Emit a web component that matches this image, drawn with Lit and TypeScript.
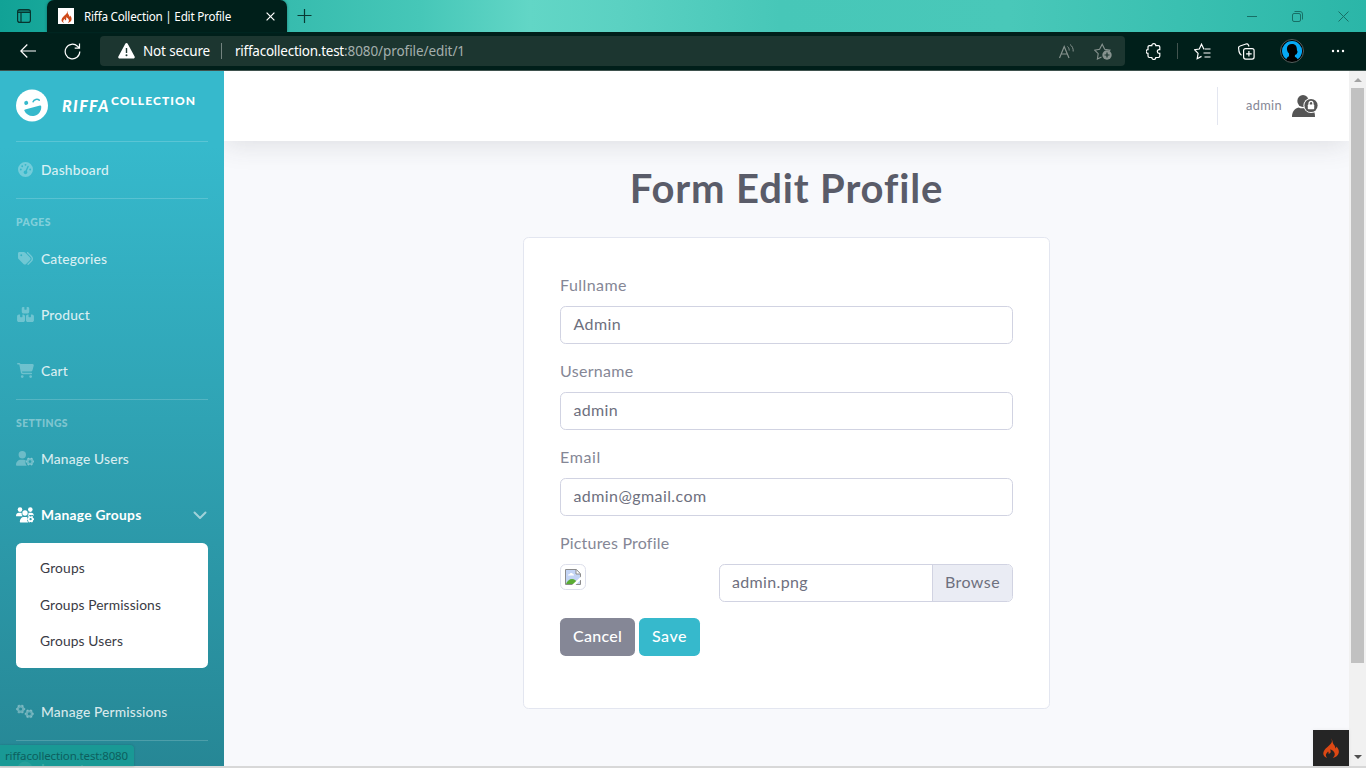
import { LitElement, html, css, svg, nothing } from "lit";
import { customElement, property } from "lit/decorators.js";

/** Text run tracked so that its advance equals the given width in pixels. */
@customElement("tracked-text")
class TrackedText extends LitElement {
  static styles = css`
    :host { display: inline-block; white-space: pre; flex: none; }
    .run { display: inline-block; }
  `;
  @property() text = "";
  @property({ type: Number }) span = 0;
  updated() {
    const run = this.renderRoot.querySelector(".run") as HTMLElement;
    run.style.letterSpacing = "0px";
    const natural = run.getBoundingClientRect().width;
    if (this.span && this.text.length > 1)
      run.style.letterSpacing = (this.span - natural) / this.text.length + "px";
  }
  render() {
    return html`<span class="run">${this.text}</span>`;
  }
}

const t = (text: string, span: number) => html`<tracked-text .text=${text} .span=${span}></tracked-text>`;

const gear = (cx: number, cy: number, r: number) => svg`
  <circle cx=${cx} cy=${cy} r=${r * 0.58} fill="none" stroke="currentColor" stroke-width=${r * 0.5}/>
  <circle cx=${cx} cy=${cy} r=${r * 0.86} fill="none" stroke="currentColor" stroke-width=${r * 0.3} pathLength="12" stroke-dasharray="1 1" stroke-dashoffset="0.5"/>`;

const gauge = html`<svg width="15" height="15" viewBox="0 0 512 512"><path fill="currentColor" fill-rule="evenodd" d="M0 256a256 256 0 1 1 512 0A256 256 0 1 1 0 256zM288 96a32 32 0 1 0-64 0 32 32 0 1 0 64 0zM256 416c35.300 0 64-28.700 64-64 0-17.400-6.900-33.100-18.100-44.600L366 161.700c5.300-12.100-.2-26.300-12.300-31.600s-26.300.2-31.600 12.300L257.900 288c-.6 0-1.300 0-1.900 0-35.300 0-64 28.700-64 64s28.700 64 64 64zM176 144a32 32 0 1 0-64 0 32 32 0 1 0 64 0zM96 288a32 32 0 1 0 0-64 32 32 0 1 0 0 64zm352-32a32 32 0 1 0-64 0 32 32 0 1 0 64 0z"/></svg>`;
const tags = html`<svg width="15" height="15" viewBox="0 0 512 512"><path fill="currentColor" fill-rule="evenodd" d="M345 39.100L472.800 168.400c52.400 53 52.400 138.200 0 191.200L360.800 472.900c-9.300 9.400-24.500 9.500-33.900 .2s-9.500-24.500-.2-33.900L438.600 325.900c33.900-34.300 33.900-89.400 0-123.700L310.900 72.900c-9.300-9.400-9.200-24.600 .2-33.900s24.600-9.200 33.900 .2zM0 229.500V80C0 53.500 21.500 32 48 32H197.500c17 0 33.300 6.700 45.300 18.700l168 168c25 25 25 65.500 0 90.500L277.300 442.700c-25 25-65.500 25-90.500 0l-168-168C6.700 262.700 0 246.500 0 229.500zM144 144a32 32 0 1 0 -64 0 32 32 0 1 0 64 0z"/></svg>`;
const boxes = html`<svg width="17" height="15" viewBox="0 0 576 512"><path fill="currentColor" d="M248 0H208c-26.500 0-48 21.500-48 48V160c0 35.300 28.700 64 64 64H352c35.300 0 64-28.700 64-64V48c0-26.500-21.500-48-48-48H328V80c0 8.800-7.200 16-16 16H264c-8.800 0-16-7.200-16-16V0zM64 256c-35.300 0-64 28.700-64 64V448c0 35.300 28.700 64 64 64H208c35.300 0 64-28.700 64-64V320c0-35.300-28.700-64-64-64H184v80c0 8.800-7.200 16-16 16H120c-8.800 0-16-7.200-16-16V256H64zM368 512H512c35.300 0 64-28.700 64-64V320c0-35.300-28.700-64-64-64H472v80c0 8.800-7.200 16-16 16H408c-8.800 0-16-7.200-16-16V256H368c-35.300 0-64 28.700-64 64V448c0 35.300 28.700 64 64 64z"/></svg>`;
const cart = html`<svg width="17" height="15" viewBox="0 0 576 512"><path fill="currentColor" d="M0 24C0 10.700 10.700 0 24 0H69.500c22 0 41.500 12.800 50.600 32h411c26.300 0 45.500 25 38.600 50.400l-41 152.300c-8.500 31.400-37 53.300-69.500 53.300H170.700l5.400 28.500c2.200 11.300 12.100 19.500 23.600 19.500H488c13.300 0 24 10.700 24 24s-10.700 24-24 24H199.700c-34.600 0-64.300-24.600-70.700-58.500L77.400 54.500c-.7-3.800-4-6.500-7.900-6.500H24C10.700 48 0 37.300 0 24zM128 464a48 48 0 1 1 96 0 48 48 0 1 1 -96 0zm336-48a48 48 0 1 1 0 96 48 48 0 1 1 0-96z"/></svg>`;
const userGear = html`<svg width="18" height="15" viewBox="0 0 18 15"><circle cx="6.300" cy="3.700" r="3.700" fill="currentColor"/><path fill="currentColor" d="M0 14c0-3.300 2.200-5.300 5-5.300h2.600c.8 0 1.500.2 2.100.5-.8 1.800-.1 4 1.100 5.600H.8c-.5 0-.8-.3-.8-.8z"/>${gear(14, 10.6, 4.2)}</svg>`;
const usersGear = html`<svg width="18" height="16" viewBox="0 0 18 16"><g fill="currentColor"><circle cx="4" cy="2.600" r="2.300"/><circle cx="14.300" cy="2.600" r="2.300"/><circle cx="9" cy="6" r="2.700"/><path d="M0 9c0-2 1.300-3.200 2.900-3.200h1.500c.5 0 .9.100 1.300.3C5.500 7.300 5.900 8.500 6.700 9.300H.4C.2 9.300 0 9.200 0 9zM11.400 9.300c.9-.8 1.200-2 1-3.200.4-.2.800-.3 1.200-.3h1.600c1.500 0 2.700 1.200 2.700 2.900-1-.9-2-.7-2.400-.5-1.400-.6-2.500-.2-3.200 1.100zM3.800 14.700C3.800 12 5.500 9.900 7.700 9.900h2.600c.4 0 .8.100 1.100.2-.8 2-.3 3.900.9 5.300H4.400c-.4 0-.6-.3-.6-.7z"/></g>${gear(14.6, 12.2, 3.4)}</svg>`;
const gears = html`<svg width="18" height="15" viewBox="0 0 18 15">${gear(4.6, 5.1, 4.6)}${gear(13.3, 9.8, 4.6)}</svg>`;
const disc = html`<svg width="16" height="16" viewBox="0 0 16 16"><circle cx="8" cy="8" r="7.500" fill="currentColor"/></svg>`;
const flame = (w: number, h: number, c: string) => html`<svg width=${w} height=${h} viewBox="0 0 16 20"><path fill=${c} d="M7.900 0C8.700 1 9.200 2.600 8.700 4.200 8 6.300 5 8.200 2.700 10.600.7 12.700-.3 15.300.7 17.300c.7 1.400 2 2.200 3.500 2.600-1.100-1-1.600-2-1.300-3.200.3-1.300 1.500-2 2.100-3.200.7.6.7 1.400.4 2.200 1.300.2 2.300-.7 2.300-1.900 0-.9-.5-1.600-.3-2.500 2 .7 3.500 2 4.100 3.700.7 2-.2 3.700-1.700 4.900 3-.5 5.300-2.200 5.900-4.800.5-2.200-.3-4.600-2.300-6.500-.1.900-.4 1.600-1 2 .1-2-1-3.200-1.900-4.400C9.300 4.600 9.800 1.800 7.900 0z"/></svg>`;

@customElement("edge-chrome")
class EdgeChrome extends LitElement {
  static styles = css`
    :host { display: block; height: 71px; font-family: "Noto Sans", sans-serif; color: #fff; }
    .tabs { height: 32px; display: flex; background: linear-gradient(90deg, #11a296 0, #17a79a 47px, #38bdaf 300px, #46c7b8 420px, #62d6c6 530px, #5bd1c2 620px, #47c7b8 780px, #49c8b9 1010px, #38bfb0 1200px, #2bb6a8 1366px); }
    .menu { width: 47px; display: flex; align-items: center; justify-content: center; }
    .tab { width: 240px; background: #001f1a; border-radius: 7px 7px 0 0; display: flex; align-items: center; font-size: 11.700px; box-shadow: 0 0 3px #00403a88; }
    .fav { width: 16px; height: 16px; margin: 0 10px 0 11px; background: #fff; display: flex; align-items: center; justify-content: center; }
    .tab .close { margin-left: auto; margin-right: 12px; }
    .plus { margin: 9px 0 0 10px; }
    .win { margin-left: auto; display: flex; align-items: center; gap: 35px; margin-right: 17px; }
    svg { display: block; flex: none; }
    .bar { height: 38px; background: #001f1a; border-bottom: 1px solid #3f524e; display: flex; align-items: center; }
    .back { margin-left: 20px; } .reload { margin-left: 28px; }
    .address { margin-left: 19px; width: 1025px; height: 30px; background: #1c3630; border-radius: 4px; display: flex; align-items: center; font-size: 13.500px; box-sizing: border-box; padding-left: 18px; }
    .warn { margin-right: 8px; }
    .sep { width: 1px; height: 16px; background: #73837f; margin: 0 13px 0 11px; }
    .rest { color: #a4afad; }
    .read { margin-left: auto; margin-right: 20px; } .fave { margin-right: 13px; }
    .tools { display: flex; align-items: center; color: #fff; }
    .ext { margin-left: 21px; } .tsep { width: 1px; height: 16px; background: #42544f; margin: 0 16px 0 15px; }
    .coll { margin-left: 27px; } .avatar { margin-left: 25px; } .dots { margin-left: 27px; }
  `;
  render() {
    return html`
      <div class="tabs">
        <div class="menu"><svg width="14" height="14" viewBox="0 0 14 14" fill="none" stroke="#07352f" stroke-width="1.200"><rect x=".6" y=".6" width="12.800" height="12.800" rx="2.200"/><path d="M.6 3.500h12.800M4 3.500v10M1 2h12"/></svg></div>
        <div class="tab">
          <span class="fav">${flame(11, 13, "#cf4a1a")}</span>${t("Riffa Collection | Edit Profile", 147)}
          <svg class="close" width="9" height="9" viewBox="0 0 9 9" stroke="#fff" stroke-width="1.200"><path d="M.6.6l7.800 7.800M8.400.6L.6 8.400"/></svg>
        </div>
        <svg class="plus" width="15" height="14" viewBox="0 0 15 14" stroke="#093a34" stroke-width="1.200"><path d="M7.500 0v14M.5 6.500h14"/></svg>
        <div class="win">
          <svg width="10" height="10" viewBox="0 0 10 10" stroke="#177066"><path d="M0 5.500h10"/></svg>
          <svg width="11" height="11" viewBox="0 0 11 11" fill="none" stroke="#177066"><rect x=".5" y="2.500" width="8" height="8" rx="1.500"/><path d="M2.500.5h5.500a2.500 2.500 0 0 1 2.500 2.500v5.500"/></svg>
          <svg width="11" height="11" viewBox="0 0 11 11" stroke="#177066"><path d="M.5.5l10 10M10.500.5l-10 10"/></svg>
        </div>
      </div>
      <div class="bar">
        <svg class="back" width="16" height="14" viewBox="0 0 16 14" fill="none" stroke="#fff" stroke-width="1.200"><path d="M16 7H.8M7.300.500L.8 7l6.500 6.500"/></svg>
        <svg class="reload" width="17" height="17" viewBox="0 0 17 17" fill="none" stroke="#fff" stroke-width="1.200"><path d="M15.800 8.500a7.300 7.300 0 1 1-2.300-5.300L15.300 5M15.500.5V5.200h-4.800"/></svg>
        <div class="address">
          <svg class="warn" width="17" height="16" viewBox="0 0 17 16"><path fill="#fff" fill-rule="evenodd" d="M7.300.8a1.400 1.400 0 0 1 2.400 0l6.900 12.800c.5.900-.1 1.900-1.100 1.900h-14c-1 0-1.600-1-1.100-1.900zM7.800 5v5h1.400V5zM8.500 11.300a1 1 0 1 0 0 2 1 1 0 0 0 0-2z"/></svg>
          ${t("Not secure", 67)}<span class="sep"></span>${t("riffacollection.test", 109)}<span class="rest">${t(":8080/profile/edit/1", 121)}</span>
          <svg class="read" width="15" height="15" viewBox="0 0 15 15" fill="none" stroke="#87938f"><path stroke-width="1.200" d="M.5 14L5.200 2.500 10 14M2.200 10h6"/><path d="M8.500 2.500c1.200 1 1.700 2.300 1.700 4M11 .5c2.300 1.700 3.400 4 3.200 7"/></svg>
          <svg class="fave" width="18" height="17" viewBox="0 0 18 17"><path fill="none" stroke="#87938f" stroke-width="1.100" d="M7.500 14.100L3.400 16l.8-5.300L.6 7.100l5-.8L8.200 1.300l2.500 5 5.200.8-1.500 1.500"/><circle cx="13" cy="12" r="4.700" fill="#87938f"/><path stroke="#1c3630" stroke-width="1.200" d="M13 9.500v5M10.500 12h5"/></svg>
        </div>
        <div class="tools">
          <svg class="ext" width="16" height="17" viewBox="0 0 16 17" fill="none" stroke="#fff" stroke-width="1.200"><path d="M3.400 2.600h2.400a2 2 0 0 1 4 0h2.600c.8 0 1.400.6 1.400 1.400v2.600h-.6a1.900 1.900 0 0 0 0 3.800h.6v2.700c0 .8-.6 1.400-1.400 1.400H9.800a2 2 0 0 1-4 0H3.400c-.8 0-1.400-.6-1.400-1.400v-2.700a1.900 1.900 0 0 1 0-3.800V4c0-.8.600-1.400 1.400-1.400z"/></svg>
          <span class="tsep"></span>
          <svg width="17" height="17" viewBox="0 0 17 17" fill="none" stroke="#fff" stroke-width="1.200"><path d="M10 6H9.800L7.500 1.200 5.300 6l-4.700.7 3.500 3.700-.9 5.300 4.300-2.300M10.500 6h6M9.500 10h7M10.500 14h6"/></svg>
          <svg class="coll" width="17" height="17" viewBox="0 0 17 17" fill="none" stroke="#fff" stroke-width="1.200"><rect x="5.600" y="5.600" width="10.500" height="10.500" rx="2"/><path d="M10.900 8v5.600M8.100 10.800h5.600M3.500 12.300C2 11.600 1.500 10.500 1 8.500L.6 5c-.1-1 .4-1.800 1.500-2L8 1c1-.3 1.900 0 2.400 1l.6 1.500"/></svg>
          <svg class="avatar" width="24" height="24" viewBox="0 0 24 24"><circle cx="12" cy="12" r="11.500" fill="#000" stroke="#55615f"/><path fill="#06a8f4" d="M6.500 20.300A10 10 0 1 1 17.600 20.300c-.5-1.300-1.700-2-2.800-2.600l.2-1.900c1.200-.1 2.100-.5 2-2l.7-.6-.8-2.300c.2-4.200-2-6-4.900-6-3.500 0-5.500 2.300-5 5.600.2 2 1.100 3.100 2 4.100v2.600c-1.200.9-2.400 1.400-2.500 3.100z"/></svg>
          <svg class="dots" width="14" height="4" viewBox="0 0 14 4" fill="#fff"><circle cx="2" cy="2" r="1.200"/><circle cx="7" cy="2" r="1.200"/><circle cx="12" cy="2" r="1.200"/></svg>
        </div>
      </div>`;
  }
}

@customElement("side-nav")
class SideNav extends LitElement {
  static styles = css`
    :host { display: block; width: 224px; height: 695px; flex: none; overflow: hidden; box-sizing: border-box; padding: 0 16px; font-family: Lato, sans-serif; color: #fff; background: linear-gradient(180deg, #36b9cc 75px, #258391 745px); }
    svg { display: block; }
    .brand { height: 70px; box-sizing: border-box; padding-bottom: 2px; display: flex; align-items: center; font-weight: 900; }
    .face { margin-right: 14px; }
    .riffa { font-size: 16px; font-style: italic; }
    .coll { font-size: 12px; padding-bottom: 10px; margin-left: 1px; }
    .rule { height: 1px; background: rgba(255,255,255,.18); }
    .row { height: 56px; display: flex; align-items: center; font-size: 13.800px; color: rgba(255,255,255,.82); font-weight: 500; }
    .row tracked-text { padding-bottom: 2px; }
    .ico { width: 18px; margin-right: 7px; padding-bottom: 1px; display: flex; justify-content: center; color: rgba(255,255,255,.3); }
    .active { color: #fff; font-weight: 700; } .active .ico { color: #fff; }
    .chev { margin-left: auto; margin-right: 1px; }
    .head { height: 32px; line-height: 47px; font-size: 10.400px; font-weight: 900; color: rgba(255,255,255,.4); }
    .head.short { height: 31px; }
    .sub { height: 125px; margin-bottom: 16px; box-sizing: border-box; padding: 8px 24px; background: #fff; border-radius: 5.600px; color: #3a3b45; font-size: 13.800px; }
    .sub div { height: 36.500px; line-height: 34px; }
  `;
  row(icon: unknown, text: string, w: number, active = false) {
    return html`<div class="row ${active ? "active" : ""}"><span class="ico">${icon}</span>${t(text, w)}${active ? html`<svg class="chev" width="14" height="9" viewBox="0 0 14 9" fill="none" stroke="#fff" stroke-opacity=".55" stroke-width="2" stroke-linecap="round" stroke-linejoin="round"><path d="M1.500 1.500L7 7l5.500-5.500"/></svg>` : nothing}</div>`;
  }
  render() {
    return html`
      <div class="brand">
        <svg class="face" width="32" height="33" viewBox="0 0 32 32"><circle cx="16" cy="16" r="16" fill="#fff"/><g transform="rotate(-15 16 16)" fill="#36b9cc"><circle cx="11.100" cy="12" r="2"/><path d="M8.300 18h15.400c.7 0 1.100.5 1 1.100-.6 4.300-4.400 7.500-8.700 7.500s-8.100-3.200-8.700-7.500c-.1-.6.300-1.100 1-1.100z"/><path fill="none" stroke="#36b9cc" stroke-width="1.500" stroke-linecap="round" d="M18 12.700c1.400-2.100 5-2.100 6.400 0"/></g></svg>
        <span class="riffa">${t("RIFFA", 48)}</span><span class="coll">${t("COLLECTION", 85)}</span>
      </div>
      <div class="rule"></div>
      ${this.row(gauge, "Dashboard", 68)}
      <div class="rule"></div>
      <div class="head">${t("PAGES", 35)}</div>
      ${this.row(tags, "Categories", 66)}${this.row(boxes, "Product", 49)}${this.row(cart, "Cart", 27)}
      <div class="rule"></div>
      <div class="head short">${t("SETTINGS", 52)}</div>
      ${this.row(userGear, "Manage Users", 88)}${this.row(usersGear, "Manage Groups", 100.5, true)}
      <div class="sub"><div>${t("Groups", 45)}</div><div>${t("Groups Permissions", 121)}</div><div>${t("Groups Users", 83)}</div></div>
      ${this.row(gears, "Manage Permissions", 126.5)}
      <div class="rule"></div>
      ${this.row(disc, "Logout", 44)}`;
  }
}

@customElement("app-root")
class AppRoot extends LitElement {
  static styles = css`
    :host { display: block; position: relative; width: 1366px; height: 768px; overflow: hidden; background: #d8d8d8; font-family: Lato, sans-serif; color: #858796; }
    svg { display: block; }
    .view { height: 695px; display: flex; overflow: hidden; background: #f8f9fc; }
    .main { width: 1125px; flex: none; overflow: hidden; display: flex; flex-direction: column; align-items: center; }
    .top { width: 1125px; height: 70px; flex: none; background: #fff; box-shadow: 0 2.400px 28px rgba(58,59,69,.15); display: flex; align-items: center; justify-content: flex-end; box-sizing: border-box; padding-right: 31px; font-size: 12.800px; }
    .vr { width: 1px; height: 38px; background: #e3e6f0; margin-right: 28px; }
    .who { margin-right: 10px; padding-bottom: 3px; }
    h1 { margin: 24px 0 0; height: 48px; line-height: 47px; font-size: 40px; font-weight: 700; color: #5a5c69; }
    .card { margin-top: 24px; width: 527px; height: 472px; flex: none; box-sizing: border-box; border: 1px solid #e3e6f0; border-radius: 5.600px; background: #fff; padding: 36px; font-size: 16px; }
    .label { height: 32px; line-height: 22px; }
    .field { height: 38px; margin-bottom: 16px; box-sizing: border-box; border: 1px solid #d1d3e2; border-radius: 5.600px; padding: 0 12px 0 12.500px; line-height: 34px; color: #6e707e; background: #fff; }
    .files { display: flex; justify-content: space-between; align-items: flex-start; height: 54px; }
    .thumb { width: 26px; height: 26px; box-sizing: border-box; border: 1px solid #dddfeb; border-radius: 5.600px; padding: 4px; }
    .file { display: flex; width: 294px; padding: 0 0 0 12px; overflow: hidden; }
    .name { flex: 1; }
    .browse { width: 80px; height: 36px; box-sizing: border-box; border-left: 1px solid #d1d3e2; padding-left: 12px; background: #eaecf4; }
    .btns { display: flex; gap: 4px; color: #fff; font-weight: 500; line-height: 36px; }
    .btn { height: 38px; border-radius: 5.600px; text-align: center; }
    .cancel { width: 75px; background: #858796; } .save { width: 61px; background: #36b9cc; }
    .scroll { width: 17px; background: #f1f1f1; display: flex; flex-direction: column; align-items: center; }
    .up { margin-top: 7px; } .thumbbar { margin-top: 6px; width: 13px; height: 575px; background: #c1c1c1; }
    .down { margin-top: auto; margin-bottom: 7px; }
    .debug { position: absolute; left: 1313px; top: 730px; width: 36px; height: 36px; background: #252525; display: flex; align-items: center; justify-content: center; box-shadow: 0 0 4px #0001; }
    .status { position: absolute; left: 0; top: 745px; width: 134px; height: 21px; box-sizing: border-box; padding-left: 5px; font: 11.500px/21px "Noto Sans", sans-serif; color: #0d5f5e; background: rgba(22,157,149,.8); border-radius: 0 4px 0 0; box-shadow: 0 0 2px #00404060; }
  `;
  render() {
    return html`
      <edge-chrome></edge-chrome>
      <div class="view">
        <side-nav></side-nav>
        <div class="main">
          <div class="top"><span class="vr"></span><span class="who">${t("admin", 36)}</span>
            <svg width="26" height="24" viewBox="0 0 26 24"><g fill="#555"><ellipse cx="11" cy="7" rx="5.700" ry="6"/><path d="M0 23c0-5 2-8.300 6.800-9.600C9 14.600 11.500 14.600 14 13.400c2 3.300 5 4.600 8.400 4.800.5 1.500.6 3 .6 4.800z"/></g><circle cx="19" cy="11.500" r="7.600" fill="#fff"/><circle cx="19" cy="11.500" r="6.600" fill="#555"/><rect x="15.800" y="10.600" width="6.400" height="4.600" rx=".6" fill="#fff"/><path fill="none" stroke="#fff" stroke-width="1.300" d="M17.100 11V9.300a1.900 1.900 0 0 1 3.800 0V11"/></svg>
          </div>
          <h1>${t("Form Edit Profile", 313)}</h1>
          <div class="card">
            <div class="label">${t("Fullname", 67)}</div><div class="field">${t("Admin", 47.5)}</div>
            <div class="label">${t("Username", 73.5)}</div><div class="field">${t("admin", 44.5)}</div>
            <div class="label">${t("Email", 41)}</div><div class="field">${t("admin@gmail.com", 133)}</div>
            <div class="label">${t("Pictures Profile", 109)}</div>
            <div class="files">
              <div class="thumb"><svg width="16" height="16" viewBox="0 0 16 16"><path fill="#c3d4f5" d="M1 1h10l4 4v10H1z"/><path fill="#fff" d="M3 6.500c0-1 .8-1.500 1.600-1.300C5 3.500 7.500 3.600 7.800 5c.9 0 1.200.7 1.200 1.500zM11 1l4 4h-4z"/><path fill="#5aac34" d="M1 15c1-3 3.500-5 6-5s4 1.500 5 3l-2 2z"/><path fill="none" stroke="#8b8b8b" d="M.5.5h10.800l4.200 4.200v10.800H.5zM11 .5V5h4.500"/><path fill="#fff" d="M16 7.500v3L10.500 16H7z"/></svg></div>
              <div class="field file"><span class="name">${t("admin.png", 76)}</span><span class="browse">${t("Browse", 55)}</span></div>
            </div>
            <div class="btns"><div class="btn cancel">${t("Cancel", 49)}</div><div class="btn save">${t("Save", 35)}</div></div>
          </div>
        </div>
        <div class="scroll">
          <svg class="up" width="8" height="4" viewBox="0 0 8 4"><path fill="#a3a3a3" d="M0 4l4-4 4 4z"/></svg>
          <div class="thumbbar"></div>
          <svg class="down" width="8" height="4" viewBox="0 0 8 4"><path fill="#505050" d="M0 0l4 4 4-4z"/></svg>
        </div>
      </div>
      <div class="debug">${flame(16, 20, "#dd4814")}</div>
      <div class="status">${t("riffacollection.test:8080", 123)}</div>`;
  }
}
